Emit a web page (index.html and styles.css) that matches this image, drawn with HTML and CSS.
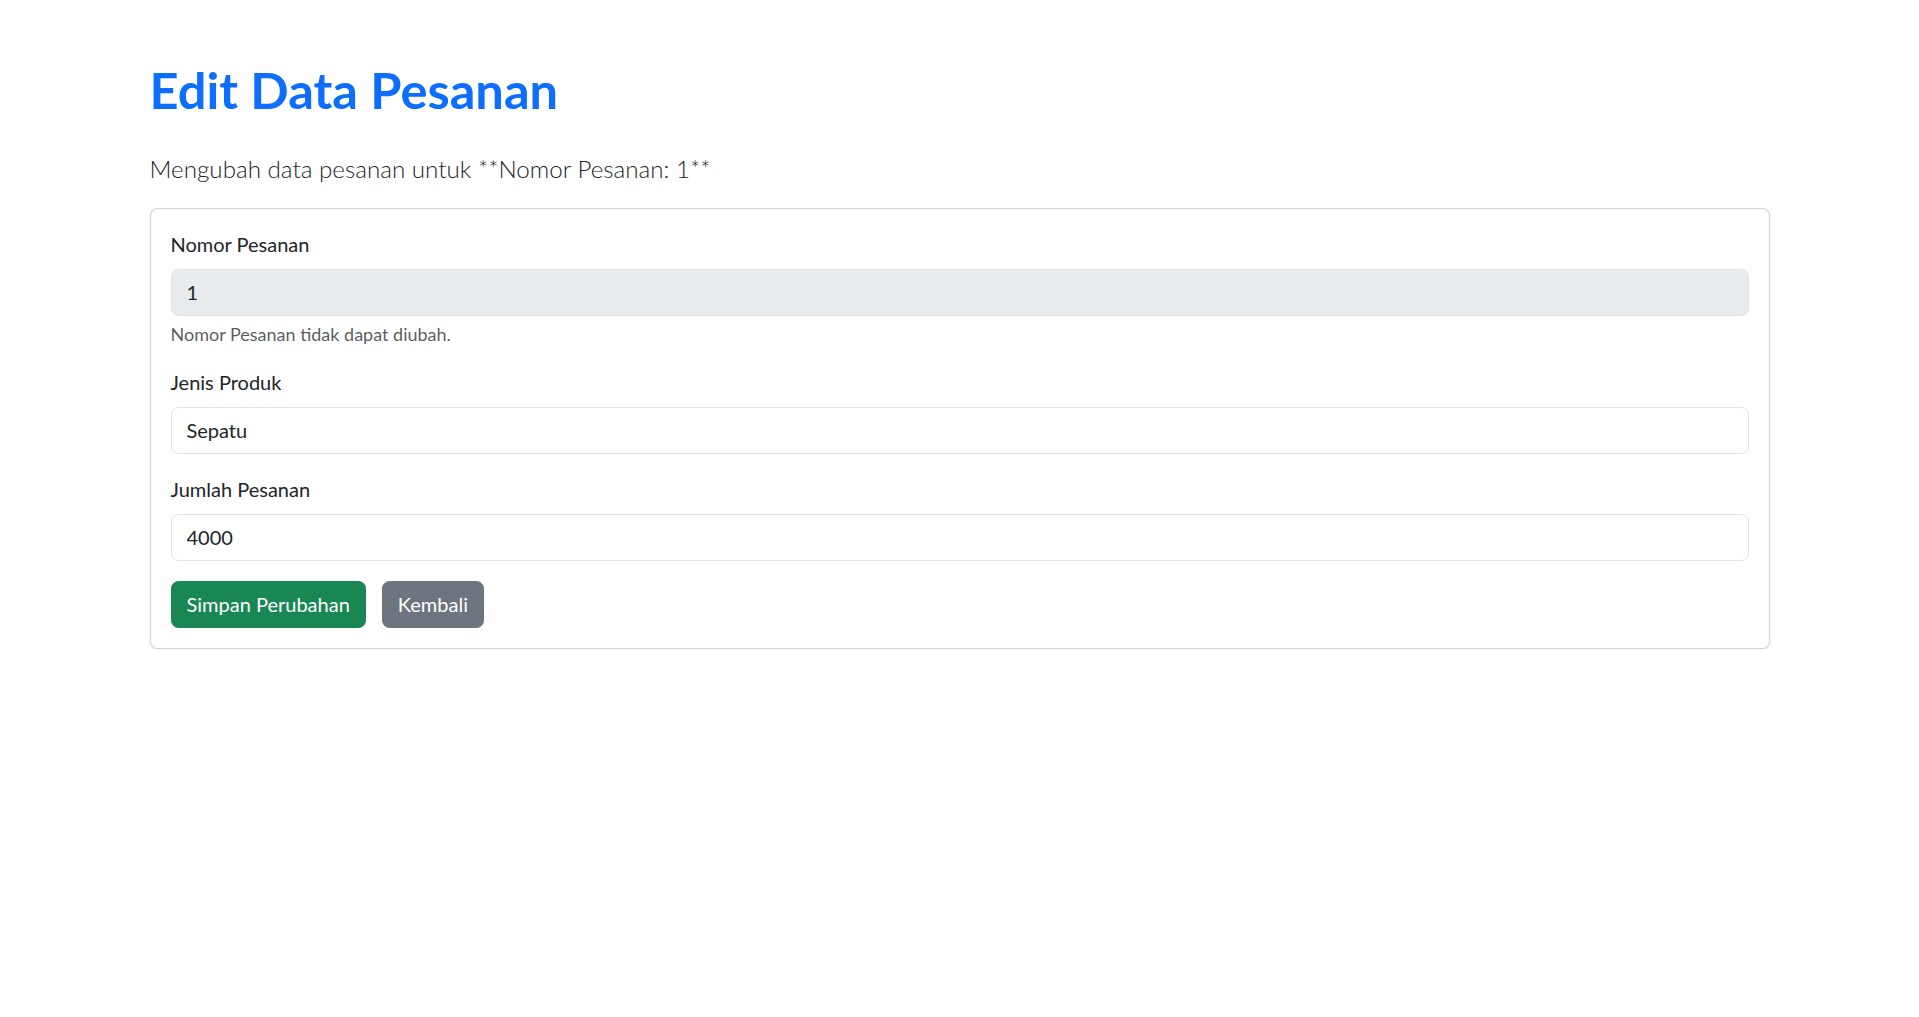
FILE: index.html
```html
<!DOCTYPE html>
<html lang="id">
<head>
<meta charset="utf-8">
<title>Edit Data Pesanan</title>
<link rel="stylesheet" href="styles.css">
</head>
<body>
<div class="container">
  <h1 class="title">Edit Data Pesanan</h1>
  <p class="lead">Mengubah data pesanan untuk **Nomor Pesanan: 1**</p>
  <div class="card">
    <div class="card-body">
      <form class="form">
        <div class="field">
          <label class="form-label" for="nomor">Nomor Pesanan</label>
          <input class="form-control" id="nomor" type="text" value="1" disabled>
          <div class="form-text">Nomor Pesanan tidak dapat diubah.</div>
        </div>
        <div class="field">
          <label class="form-label" for="jenis">Jenis Produk</label>
          <input class="form-control" id="jenis" type="text" value="Sepatu">
        </div>
        <div class="field">
          <label class="form-label" for="jumlah">Jumlah Pesanan</label>
          <input class="form-control" id="jumlah" type="number" value="4000">
        </div>
        <div class="actions">
          <button class="btn btn-success" type="button">Simpan Perubahan</button>
          <a class="btn btn-secondary" href="#">Kembali</a>
        </div>
      </form>
    </div>
  </div>
</div>
</body>
</html>
```
FILE: styles.css
```css
* { box-sizing: border-box; }
html, body { margin: 0; padding: 0; background: #fff; }
body {
  font-family: Lato, "Open Sans", "Liberation Sans", sans-serif;
  font-size: 20px;
  line-height: 1.5;
  color: #212529;
}
.container {
  max-width: 1650px;
  margin: 0 auto;
  padding: 60px 15px 0;
}
.title {
  margin: 0 0 30px;
  font-size: 50.6px;
  line-height: 60px;
  font-weight: 700;
  color: #0d6efd;
}
.lead {
  margin: 0 0 20px;
  font-size: 24.2px;
  line-height: 37.5px;
  font-weight: 300;
}
.card {
  border: 1px solid rgba(0, 0, 0, 0.175);
  border-radius: 7.5px;
  box-shadow: 0 2.5px 5px rgba(0, 0, 0, 0.075);
  background: #fff;
}
.card-body { padding: 20px; }
.form { display: flex; flex-direction: column; gap: 20px; }
.field { display: flex; flex-direction: column; }
.form-label { display: block; margin-bottom: 10px; }
.form-control {
  display: block;
  width: 100%;
  padding: 7.5px 15px;
  font: inherit;
  line-height: 30px;
  color: #212529;
  background: #fff;
  border: 1px solid #dee2e6;
  border-radius: 7.5px;
  outline: none;
  -moz-appearance: textfield;
}
.form-control::-webkit-outer-spin-button,
.form-control::-webkit-inner-spin-button { -webkit-appearance: none; margin: 0; }
.form-control:disabled {
  background: #e9ecef;
  color: #212529;
  -webkit-text-fill-color: #212529;
  opacity: 1;
}
.form-text {
  margin-top: 5px;
  font-size: 18px;
  line-height: 26.25px;
  color: rgba(33, 37, 41, 0.75);
}
.actions { display: flex; gap: 16px; }
.btn {
  display: inline-block;
  padding: 7.5px 15px;
  font: inherit;
  line-height: 30px;
  color: #fff;
  text-decoration: none;
  border: 1px solid transparent;
  border-radius: 7.5px;
  cursor: pointer;
}
.btn-success { background: #198754; border-color: #198754; }
.btn-secondary { background: #6c757d; border-color: #6c757d; }
```
